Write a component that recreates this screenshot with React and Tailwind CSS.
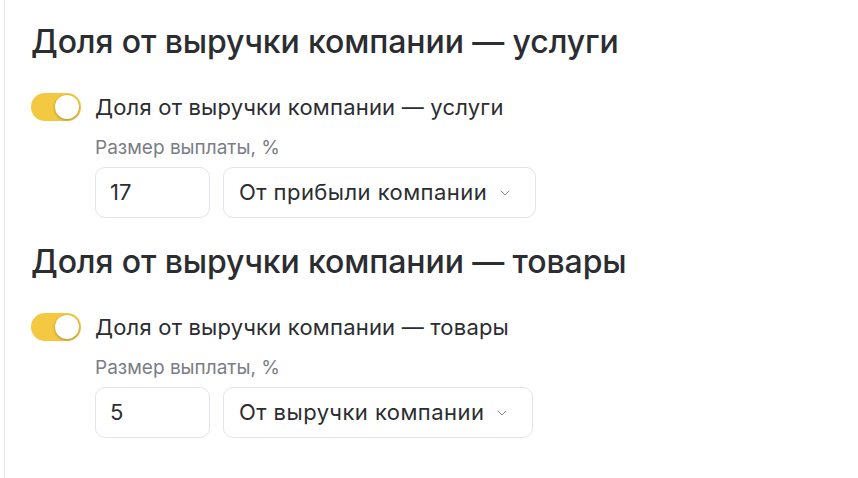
import { ChevronDown } from 'lucide-react';

const sections = [
  { title: 'Доля от выручки компании — услуги', value: '17', mode: 'От прибыли компании' },
  { title: 'Доля от выручки компании — товары', value: '5', mode: 'От выручки компании' },
];

function Toggle() {
  return (
    <div className="w-[50px] h-[28px] rounded-full bg-[#f5c842] flex items-center justify-end px-[2px] shrink-0">
      <div className="w-[24px] h-[24px] rounded-full bg-white shadow-[0_1px_3px_rgba(0,0,0,0.3)]" />
    </div>
  );
}

function Section({ title, value, mode }) {
  return (
    <section className="flex flex-col">
      <h2 className="text-[32px] leading-[40px] font-medium text-[#2b2d31] tracking-[-0.1px]">{title}</h2>
      <div className="flex items-center gap-[14px] mt-[31px] h-[28px]">
        <Toggle />
        <span className="text-[22px] leading-[28px] text-[#2b2d31] tracking-[0.2px]">{title}</span>
      </div>
      <div className="pl-[64px] flex flex-col mt-[15px]">
        <span className="text-[19px] leading-[24px] text-[#7a7d85]">Размер выплаты, %</span>
        <div className="flex gap-[13px] mt-[7px]">
          <div className="w-[115px] h-[51px] rounded-[10px] border border-[#e3e4ea] flex items-center px-[14px] text-[22px] text-[#2b2d31]">
            {value}
          </div>
          <div className="h-[51px] rounded-[10px] border border-[#e3e4ea] flex items-center pl-[15px] pr-[22px] gap-[10px] text-[22px] text-[#2b2d31] tracking-[0.45px]">
            <span>{mode}</span>
            <ChevronDown size={16} strokeWidth={1.5} className="text-[#8a8c93]" />
          </div>
        </div>
      </div>
    </section>
  );
}

export default function App() {
  return (
    <div className="w-[858px] h-[478px] bg-white overflow-hidden flex" style={{ fontFamily: 'Inter, "Noto Sans", sans-serif' }}>
      <div className="w-[5px] border-r border-[#e6e6f0] shrink-0" />
      <div className="flex flex-col gap-[24px] pl-[26px] pt-[22px]">
        {sections.map((s) => (
          <Section key={s.value} {...s} />
        ))}
      </div>
    </div>
  );
}
